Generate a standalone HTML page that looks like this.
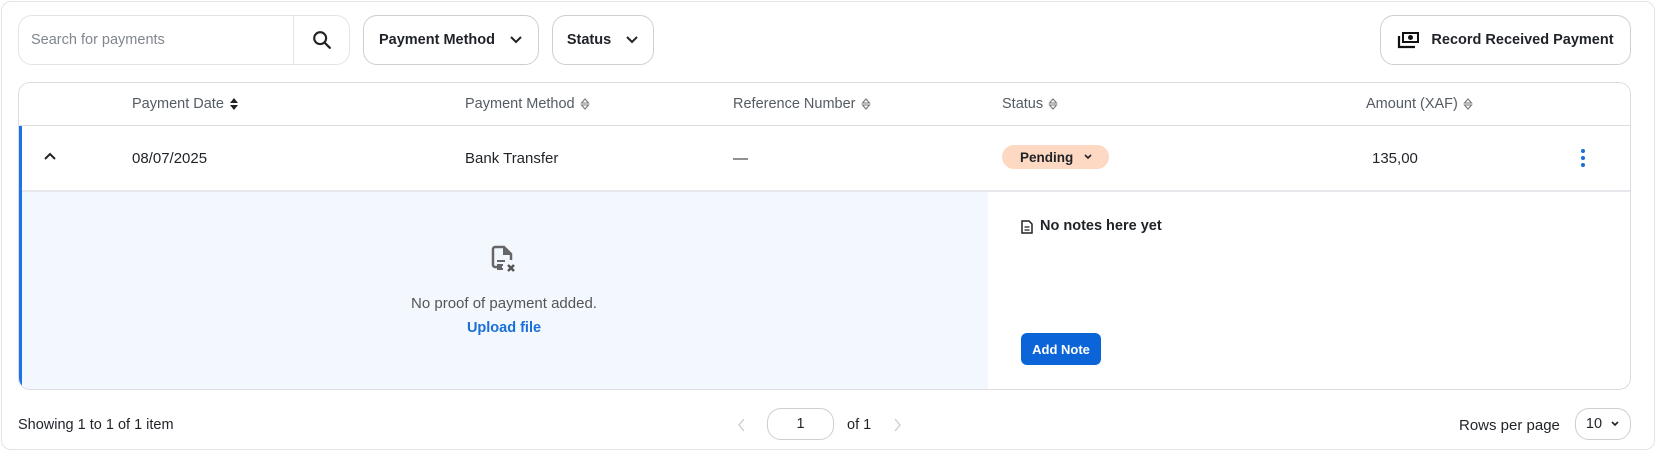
<!DOCTYPE html>
<html><head><style>
*{box-sizing:border-box;margin:0;padding:0}
body{width:1664px;height:452px;background:#fff;font-family:"Liberation Sans",sans-serif;color:#1f2328;position:relative;overflow:hidden}
.abs{position:absolute}
.panel{left:1px;top:1px;width:1654px;height:449px;border:1px solid #e3e3e3;border-radius:10px}
.btn{border:1px solid #cfcfd3;border-radius:14px;display:flex;align-items:center;font-size:15px;color:#1f2328}
.hdr{font-size:14.5px;color:#555b63;top:96px}
.cell{font-size:15px;top:150px}
.sort{display:inline-block;vertical-align:middle;margin-left:5px}
</style></head><body>
<div class="abs panel"></div>
<div class="abs btn" style="left:18px;top:15px;width:332px;height:50px;border-color:#e4e4e7">
 <span style="margin-left:12px;color:#80868e;font-size:14.5px">Search for payments</span>
 <div class="abs" style="left:274px;top:0;width:1px;height:48px;background:#e4e4e7"></div>
 <svg class="abs" style="left:292px;top:13px" width="22" height="22" viewBox="0 0 24 24"><circle cx="10" cy="10" r="6.5" fill="none" stroke="#222" stroke-width="2.3"/><path d="M15 15l5.5 5.5" stroke="#222" stroke-width="2.5" stroke-linecap="round"/></svg>
</div>
<div class="abs btn" style="left:363px;top:15px;width:176px;height:50px;justify-content:center;gap:14px;font-weight:bold;font-size:14.5px">Payment Method <svg width="14" height="10" viewBox="0 0 14 10"><path d="M2 2l5 5 5-5" fill="none" stroke="#222" stroke-width="2"/></svg></div>
<div class="abs btn" style="left:552px;top:15px;width:102px;height:50px;justify-content:center;gap:14px;font-weight:bold;font-size:14.5px">Status <svg width="14" height="10" viewBox="0 0 14 10"><path d="M2 2l5 5 5-5" fill="none" stroke="#222" stroke-width="2"/></svg></div>
<div class="abs btn" style="left:1380px;top:15px;width:251px;height:50px;justify-content:center;gap:10px;font-weight:bold;font-size:14.5px">
 <svg width="24" height="20" viewBox="0 0 24 20"><rect x="5" y="2" width="17" height="11" fill="#111"/><rect x="7" y="4" width="13" height="7" fill="#fff"/><circle cx="13.5" cy="7.5" r="2.5" fill="#111"/><path d="M2 6v11h16" fill="none" stroke="#111" stroke-width="2.2"/></svg>Record Received Payment</div>
<div class="abs" style="left:18px;top:82px;width:1613px;height:308px;border:1px solid #dcdde0;border-radius:12px;overflow:hidden">
 <div class="abs" style="left:0;top:42px;width:1613px;height:1px;background:#dcdde0"></div>
 <div class="abs" style="left:0;top:107px;width:1613px;height:2px;background:#e6e8eb"></div>
 <div class="abs" style="left:0;top:43px;width:3px;height:265px;background:#1a73e8"></div>
 <div class="abs" style="left:3px;top:109px;width:966px;height:199px;background:#f3f8fe"></div>
</div>
<div class="abs hdr" style="left:132px">Payment Date<svg class="sort" width="10" height="14" viewBox="0 0 10 14"><path d="M1 6l4-5 4 5zM1 8l4 5 4-5z" fill="#222"/></svg></div>
<div class="abs hdr" style="left:465px">Payment Method<svg class="sort" width="10" height="14" viewBox="0 0 10 14"><path d="M1.5 6l3.5-4 3.5 4zM1.5 8l3.5 4 3.5-4z" fill="none" stroke="#777" stroke-width="1.1"/></svg></div>
<div class="abs hdr" style="left:733px">Reference Number<svg class="sort" width="10" height="14" viewBox="0 0 10 14"><path d="M1.5 6l3.5-4 3.5 4zM1.5 8l3.5 4 3.5-4z" fill="none" stroke="#777" stroke-width="1.1"/></svg></div>
<div class="abs hdr" style="left:1002px">Status<svg class="sort" width="10" height="14" viewBox="0 0 10 14"><path d="M1.5 6l3.5-4 3.5 4zM1.5 8l3.5 4 3.5-4z" fill="none" stroke="#777" stroke-width="1.1"/></svg></div>
<div class="abs hdr" style="left:1366px">Amount (XAF)<svg class="sort" width="10" height="14" viewBox="0 0 10 14"><path d="M1.5 6l3.5-4 3.5 4zM1.5 8l3.5 4 3.5-4z" fill="none" stroke="#777" stroke-width="1.1"/></svg></div>
<svg class="abs" style="left:43px;top:152px" width="14" height="10" viewBox="0 0 14 10"><path d="M2 7l5-5 5 5" fill="none" stroke="#222" stroke-width="2"/></svg>
<div class="abs cell" style="left:132px">08/07/2025</div>
<div class="abs cell" style="left:465px">Bank Transfer</div>
<div class="abs cell" style="left:733px">—</div>
<div class="abs" style="left:1002px;top:145px;width:107px;height:24px;border-radius:12px;background:#fdd8c2;font-size:13.5px;font-weight:bold;display:flex;align-items:center;padding-left:18px;gap:10px">Pending <svg width="10" height="8" viewBox="0 0 10 8"><path d="M2 2l3 3 3-3" fill="none" stroke="#222" stroke-width="1.6"/></svg></div>
<div class="abs cell" style="left:1372px">135,00</div>
<svg class="abs" style="left:1579px;top:148px" width="8" height="20" viewBox="0 0 8 20"><circle cx="4" cy="3" r="2" fill="#1a6fd8"/><circle cx="4" cy="10" r="2" fill="#1a6fd8"/><circle cx="4" cy="17" r="2" fill="#1a6fd8"/></svg>
<svg class="abs" style="left:490px;top:245px" width="28" height="30" viewBox="0 0 28 30"><path d="M12 22H5a2 2 0 0 1-2-2V4a2 2 0 0 1 2-2h9l7 7v6" fill="none" stroke="#666" stroke-width="2.5"/><path d="M13 2v8h8" fill="#666"/><path d="M7 16h8M7 20h6M7 24h6" stroke="#666" stroke-width="2"/><path d="M18 20l6 6M24 20l-6 6" stroke="#555" stroke-width="2.5"/></svg>
<div class="abs" style="left:300px;top:295px;width:408px;text-align:center;font-size:15px;color:#555">No proof of payment added.</div>
<div class="abs" style="left:300px;top:320px;width:408px;text-align:center;font-size:14.5px;color:#1a6fd8;font-weight:bold">Upload file</div>
<svg class="abs" style="left:1021px;top:220px" width="12" height="14" viewBox="0 0 12 14"><path d="M1 1h7l3 3v9H1z" fill="none" stroke="#222" stroke-width="1.5"/><path d="M3.5 7h5M3.5 10h5" stroke="#222" stroke-width="1.3"/></svg>
<div class="abs" style="left:1040px;top:218px;font-size:14.5px;font-weight:bold">No notes here yet</div>
<div class="abs" style="left:1021px;top:333px;width:80px;height:32px;border-radius:6px;background:#0b64d8;color:#fff;font-size:13px;font-weight:bold;display:flex;align-items:center;justify-content:center">Add Note</div>
<div class="abs" style="left:18px;top:417px;font-size:14.5px">Showing 1 to 1 of 1 item</div>
<svg class="abs" style="left:738px;top:418px" width="8" height="14" viewBox="0 0 8 14"><path d="M6 1L1 7l5 6" fill="none" stroke="#ccc" stroke-width="1.3"/></svg>
<div class="abs" style="left:767px;top:408px;width:67px;height:32px;border:1px solid #cfcfd3;border-radius:14px;font-size:14.5px;display:flex;align-items:center;justify-content:center">1</div>
<div class="abs" style="left:847px;top:417px;font-size:14.5px">of 1</div>
<svg class="abs" style="left:893px;top:418px" width="8" height="14" viewBox="0 0 8 14"><path d="M2 1l5 6-5 6" fill="none" stroke="#ccc" stroke-width="1.3"/></svg>
<div class="abs" style="left:1459px;top:417px;font-size:15px">Rows per page</div>
<div class="abs" style="left:1575px;top:408px;width:56px;height:32px;border:1px solid #cfcfd3;border-radius:14px;font-size:14.5px;display:flex;align-items:center;justify-content:center;gap:8px">10 <svg width="10" height="8" viewBox="0 0 10 8"><path d="M2 2l3 3 3-3" fill="none" stroke="#222" stroke-width="1.6"/></svg></div>
</body></html>
